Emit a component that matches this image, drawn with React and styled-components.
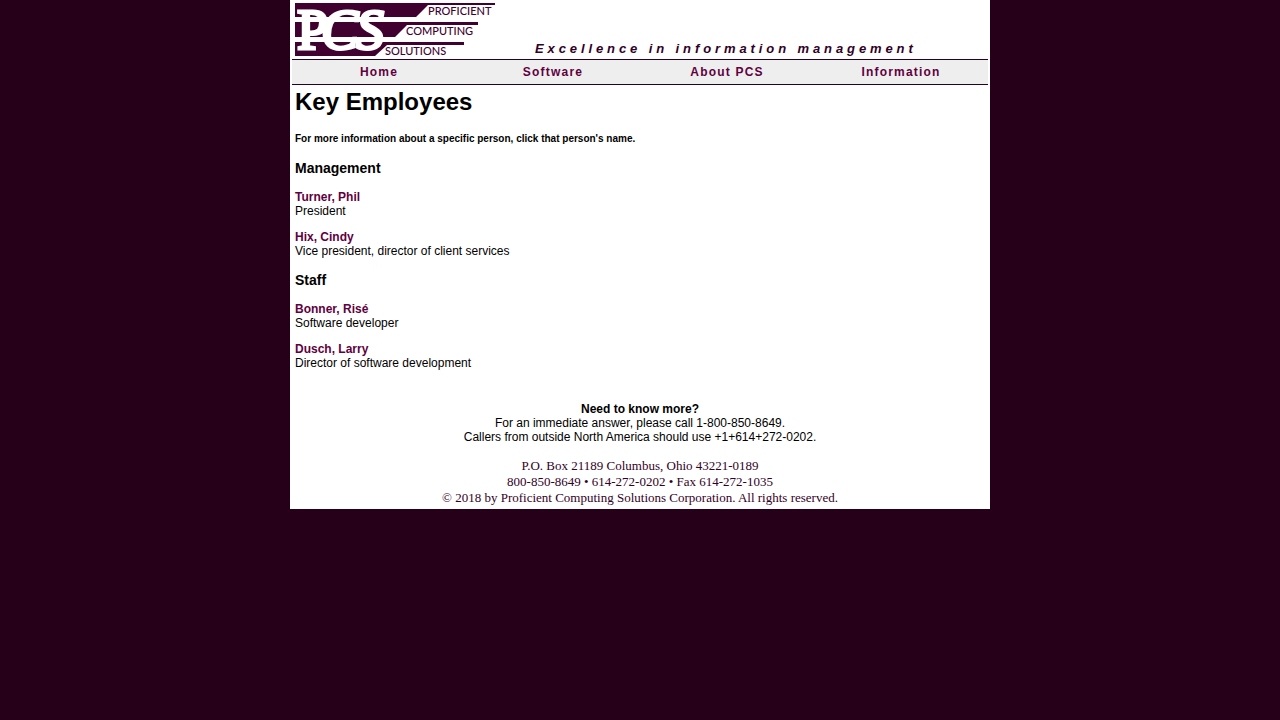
import styled, { createGlobalStyle } from 'styled-components';

const links = ['Home', 'Software', 'About PCS', 'Information'];

const groups = [
    {
        title: 'Management',
        people: [
            { name: 'Turner, Phil', role: 'President' },
            { name: 'Hix, Cindy', role: 'Vice president, director of client services' },
        ],
    },
    {
        title: 'Staff',
        people: [
            { name: 'Bonner, Risé', role: 'Software developer' },
            { name: 'Dusch, Larry', role: 'Director of software development' },
        ],
    },
];

const Logo = () => (
    <LogoImage viewBox="0 0 200 53" role="img" aria-label="Proficient Computing Solutions">
        <path d="M0 0H200V2H133L121 14H0Z" />
        <path d="M0 19H183V22H112L100 34H0Z" />
        <path d="M0 39H169V42H92L80 53H0Z" />
        <LogoLetter x="2" y="46">P</LogoLetter>
        <LogoLetter x="26" y="46" $italic>C</LogoLetter>
        <LogoLetter x="61" y="46" $italic>S</LogoLetter>
        <LogoWord x="133" y="12">PROFICIENT</LogoWord>
        <LogoWord x="111" y="32">COMPUTING</LogoWord>
        <LogoWord x="90" y="52">SOLUTIONS</LogoWord>
    </LogoImage>
);

const App = () => {
    return (
        <>
            <GlobalStyle />
            <Page>
                <Header>
                    <Logo />
                    <Tagline>Excellence in information management</Tagline>
                </Header>
                <Nav>
                    {links.map((link) => (
                        <NavLink key={link} href="#">{link}</NavLink>
                    ))}
                </Nav>
                <Main>
                    <Title>Key Employees</Title>
                    <Hint>For more information about a specific person, click that person's name.</Hint>
                    {groups.map((group) => (
                        <Group key={group.title}>
                            <GroupTitle>{group.title}</GroupTitle>
                            {group.people.map((person) => (
                                <Person key={person.name}>
                                    <PersonLink href="#">{person.name}</PersonLink>
                                    <br />
                                    {person.role}
                                </Person>
                            ))}
                        </Group>
                    ))}
                    <Contact>
                        <strong>Need to know more?</strong>
                        <br />
                        For an immediate answer, please call 1-800-850-8649.
                        <br />
                        Callers from outside North America should use +1+614+272-0202.
                    </Contact>
                </Main>
                <Footer>
                    P.O. Box 21189 Columbus, Ohio 43221-0189
                    <br />
                    800-850-8649 • 614-272-0202 • Fax 614-272-1035
                    <br />
                    © 2018 by Proficient Computing Solutions Corporation. All rights reserved.
                </Footer>
            </Page>
        </>
    );
};

export default App;

const GlobalStyle = createGlobalStyle`
    body {
        margin: 0;
        background-color: #260019;
        color: #000;
        font-family: "Liberation Sans", Arial, sans-serif;
        font-size: 12px;
        line-height: 14px;
    }
`;

const Page = styled.div`
    box-sizing: border-box;
    max-width: 700px;
    margin: 0 auto;
    padding: 3px 2px;
    background-color: #fff;
`;

const Header = styled.header`
    display: flex;
    align-items: flex-end;
    gap: 40px;
    padding: 0 3px 3px;
`;

const LogoImage = styled.svg`
    flex: none;
    width: 200px;
    height: 53px;
    overflow: visible;
    fill: #400030;
`;

const LogoLetter = styled.text`
    fill: #fff;
    stroke: #fff;
    stroke-width: 3px;
    font-family: "Liberation Serif", "Times New Roman", serif;
    font-size: 56px;
    font-style: ${({ $italic }) => ($italic ? 'italic' : 'normal')};
`;

const LogoWord = styled.text`
    font-family: Lato, sans-serif;
    font-size: 11px;
    font-weight: 500;
`;

const Tagline = styled.div`
    color: #300026;
    font-size: 13px;
    font-style: italic;
    font-weight: bold;
    letter-spacing: 0.3em;
    line-height: 15px;
`;

const Nav = styled.nav`
    display: grid;
    grid-template-columns: repeat(4, 1fr);
    border-top: 1px solid #260026;
    border-bottom: 1px solid #260026;
    background-color: #eee;
`;

const NavLink = styled.a`
    padding: 5px 0;
    color: #600040;
    font-weight: bold;
    letter-spacing: 0.1em;
    text-align: center;
    text-decoration: none;
`;

const Main = styled.main`
    padding: 3px 3px 0;
`;

const Title = styled.h1`
    margin: 0 0 17px;
    font-size: 24px;
    line-height: 28px;
`;

const Hint = styled.p`
    margin: 0 0 15px;
    font-size: 10px;
    font-weight: bold;
    line-height: 12px;
`;

const Group = styled.section`
    margin-bottom: 14px;
`;

const GroupTitle = styled.h2`
    margin: 0 0 14px;
    font-size: 14px;
    line-height: 16px;
`;

const Person = styled.p`
    margin: 0 0 12px;
`;

const PersonLink = styled.a`
    color: #600040;
    font-weight: bold;
    text-decoration: none;
`;

const Contact = styled.p`
    margin: 32px 0 0;
    text-align: center;
`;

const Footer = styled.footer`
    margin-top: 14px;
    color: #330026;
    font-family: "Liberation Serif", "Times New Roman", serif;
    font-size: 13px;
    line-height: 16px;
    text-align: center;
`;
